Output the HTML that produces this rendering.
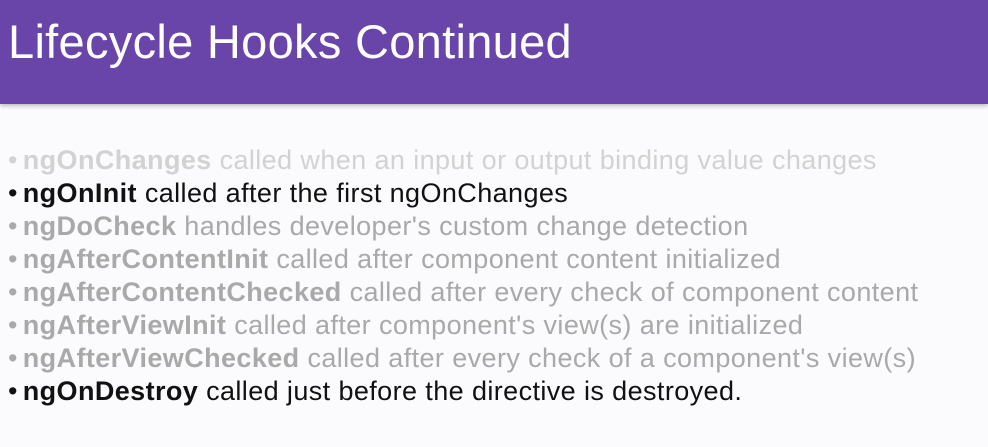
<!DOCTYPE html>
<html><head><style>
html,body{margin:0;padding:0;width:988px;height:447px;overflow:hidden;background:#fbfafc;font-family:"Liberation Sans",sans-serif}
.hdr{position:absolute;left:0;top:0;width:988px;height:104px;background:#6a45a9;box-shadow:0 2px 4px rgba(0,0,0,.25)}
.hdr h1{position:absolute;left:8px;top:14px;margin:0;font-weight:normal;color:#fff;font-size:47px;letter-spacing:0.3px;line-height:56px}
.list{position:absolute;left:8px;top:144px;font-size:27px;line-height:33px;white-space:nowrap;letter-spacing:0.4px}
.l{color:#a9a9a9}
.l.f{color:#d2d2d2}
.l.d{color:#111}
b{font-weight:bold}
.bu{margin-right:-3px}
</style></head><body>
<div class="hdr"><h1>Lifecycle Hooks Continued</h1></div>
<div class="list">
<div class="l f"><span class="bu">•</span> <b>ngOnChanges</b> called when an input or output binding value changes</div>
<div class="l d"><span class="bu">•</span> <b>ngOnInit</b> called after the first ngOnChanges</div>
<div class="l"><span class="bu">•</span> <b>ngDoCheck</b> handles developer's custom change detection</div>
<div class="l"><span class="bu">•</span> <b>ngAfterContentInit</b> called after component content initialized</div>
<div class="l"><span class="bu">•</span> <b>ngAfterContentChecked</b> called after every check of component content</div>
<div class="l"><span class="bu">•</span> <b>ngAfterViewInit</b> called after component's view(s) are initialized</div>
<div class="l"><span class="bu">•</span> <b>ngAfterViewChecked</b> called after every check of a component's view(s)</div>
<div class="l d"><span class="bu">•</span> <b>ngOnDestroy</b> called just before the directive is destroyed.</div>
</div>
</body></html>
